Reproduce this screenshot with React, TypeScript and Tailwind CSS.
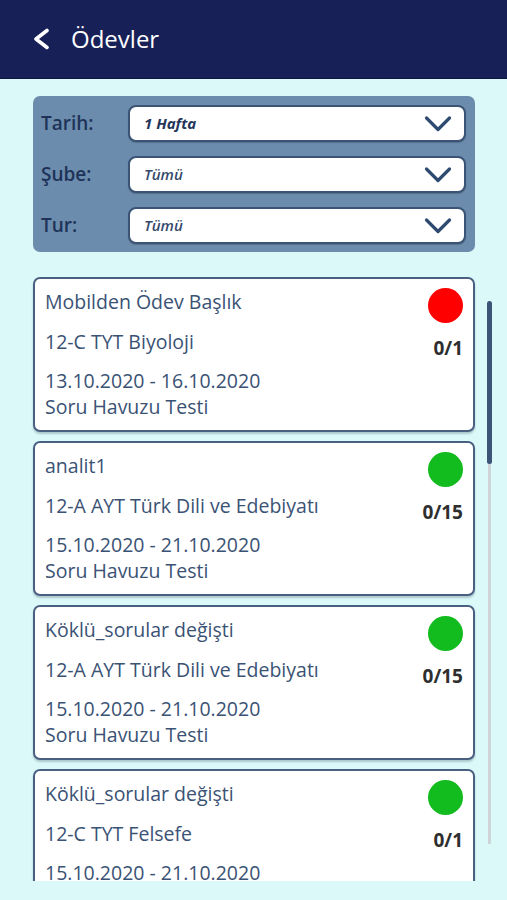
type Homework = {
  title: string;
  lesson: string;
  dates: string;
  kind: string;
  status: "red" | "green";
  count: string;
};

const items: Homework[] = [
  {
    title: "Mobilden Ödev Başlık",
    lesson: "12-C TYT Biyoloji",
    dates: "13.10.2020 - 16.10.2020",
    kind: "Soru Havuzu Testi",
    status: "red",
    count: "0/1",
  },
  {
    title: "analit1",
    lesson: "12-A AYT Türk Dili ve Edebiyatı",
    dates: "15.10.2020 - 21.10.2020",
    kind: "Soru Havuzu Testi",
    status: "green",
    count: "0/15",
  },
  {
    title: "Köklü_sorular değişti",
    lesson: "12-A AYT Türk Dili ve Edebiyatı",
    dates: "15.10.2020 - 21.10.2020",
    kind: "Soru Havuzu Testi",
    status: "green",
    count: "0/15",
  },
  {
    title: "Köklü_sorular değişti",
    lesson: "12-C TYT Felsefe",
    dates: "15.10.2020 - 21.10.2020",
    kind: "Soru Havuzu Testi",
    status: "green",
    count: "0/1",
  },
];

const filters = [
  { label: "Tarih:", value: "1 Hafta", strong: true },
  { label: "Şube:", value: "Tümü", strong: false },
  { label: "Tur:", value: "Tümü", strong: false },
];

function HomeworkCard({ item }: { item: Homework }) {
  return (
    <div className="flex shrink-0 justify-between rounded-[7px] border-2 border-[#4a6080] bg-white pt-[10px] pr-[10px] pb-[10px] pl-[10px] shadow-[0_2px_2px_rgba(30,50,80,0.25)]">
      <div className="text-[19.5px] leading-[26px] font-medium text-[#3a5274]">
        <p>{item.title}</p>
        <p className="mt-[14px]">{item.lesson}</p>
        <p className="mt-[13px]">{item.dates}</p>
        <p>{item.kind}</p>
      </div>
      <div className="flex flex-col items-end">
        <div
          className={`-mt-px h-[35px] w-[35px] rounded-full ${
            item.status === "red" ? "bg-[#ff0000]" : "bg-[#12bb1e]"
          }`}
        />
        <p className="mt-[12px] text-[19px] leading-[26px] font-bold text-[#2e2e2e]">
          {item.count}
        </p>
      </div>
    </div>
  );
}

export default function App() {
  return (
    <div className="flex h-[900px] flex-col overflow-hidden bg-[#dcf9f9] font-['Open_Sans',sans-serif]">
      <header className="flex h-[79px] shrink-0 items-center gap-[20px] border-b border-[#0e1441] bg-[#172057] pl-[31px]">
        <svg width="20" height="22" viewBox="0 0 20 22" fill="none">
          <polyline
            points="16,2.5 5,11 16,19.5"
            stroke="white"
            strokeWidth="3.6"
            strokeLinecap="round"
            strokeLinejoin="round"
          />
        </svg>
        <h1 className="text-[24px] font-medium text-white">Ödevler</h1>
      </header>

      <div className="mx-[33px] mt-[17px] mr-[32px] flex flex-col gap-[14px] rounded-[7px] bg-[#6b8cad] pt-[9px] pr-[9px] pb-[8px] pl-[8px]">
        {filters.map((f) => (
          <div key={f.label} className="flex items-center">
            <span className="w-[87px] text-[19px] font-semibold text-[#1e3357]">
              {f.label}
            </span>
            <div className="flex h-[37px] flex-1 items-center justify-between rounded-[8px] border-2 border-[#3b5374] bg-white pr-[12px] pl-[14px] shadow-[0_1px_1px_rgba(0,0,0,0.2)]">
              <span
                className={`text-[15px] italic ${
                  f.strong
                    ? "font-bold text-[#24355a]"
                    : "font-semibold text-[#34496b]"
                }`}
              >
                {f.value}
              </span>
              <svg width="28" height="18" viewBox="0 0 28 18" fill="none">
                <polyline
                  points="2.5,3 14,14.5 25.5,3"
                  stroke="#2e4a70"
                  strokeWidth="3.2"
                  strokeLinecap="round"
                  strokeLinejoin="round"
                />
              </svg>
            </div>
          </div>
        ))}
      </div>

      <div className="relative mt-[25px] h-[604px] overflow-hidden">
        <div className="mx-[33px] mr-[32px] flex flex-col gap-[9px]">
          {items.map((item, i) => (
            <HomeworkCard key={i} item={item} />
          ))}
        </div>
        <div className="absolute top-[24px] left-[487px] h-[543px] w-[5px]">
          <div className="mx-auto h-full w-[3px] bg-[#cfd4d8]" />
          <div className="absolute top-0 left-0 h-[163px] w-[5px] rounded-full bg-[#3b5477]" />
        </div>
      </div>
    </div>
  );
}
